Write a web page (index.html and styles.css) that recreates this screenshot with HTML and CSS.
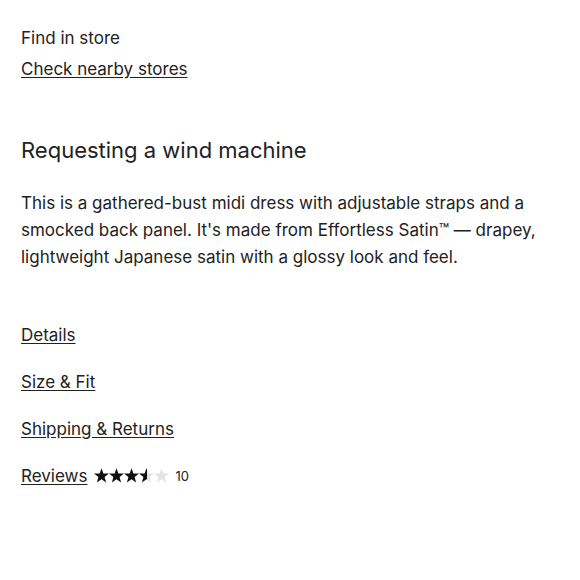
FILE: index.html
```html
<!DOCTYPE html>
<html lang="en">
<head>
  <meta charset="UTF-8" />
  <title>Requesting a wind machine</title>
  <link rel="stylesheet" href="styles.css">
</head>
<body>
  <div class="product-info">
    <div class="store">
      <p class="store-label">Find in store</p>
      <a class="store-link" href="#">Check nearby stores</a>
    </div>

    <h2 class="title">Requesting a wind machine</h2>
    <p class="description">This is a gathered-bust midi dress with adjustable straps and a smocked back panel. It's made from Effortless Satin™ — drapey, lightweight Japanese satin with a glossy look and feel.</p>

    <ul class="sections">
      <li><a href="#">Details</a></li>
      <li><a href="#">Size &amp; Fit</a></li>
      <li><a href="#">Shipping &amp; Returns</a></li>
      <li class="reviews">
        <a href="#">Reviews</a>
        <svg class="stars" width="76" height="16" viewBox="0 0 76 16">
          <defs>
            <path id="star" d="M7.5 0.2 9.4 5.4 15 5.6 10.6 9 12.1 14.5 7.5 11.3 2.9 14.5 4.4 9 0 5.6 5.6 5.4Z" />
            <linearGradient id="half">
              <stop offset="50%" stop-color="#111" />
              <stop offset="50%" stop-color="#e3e3e3" />
            </linearGradient>
          </defs>
          <use href="#star" x="0" fill="#111" />
          <use href="#star" x="15" fill="#111" />
          <use href="#star" x="30" fill="#111" />
          <use href="#star" x="45" fill="url(#half)" />
          <use href="#star" x="60" fill="#e3e3e3" />
        </svg>
        <span class="count">10</span>
      </li>
    </ul>
  </div>
</body>
</html>
```
FILE: styles.css
```css
body {
  margin: 0;
  background: #fff;
  color: #222;
  font-family: "Inter", sans-serif;
}
a {
  color: #222;
  text-underline-offset: 2px;
}
.product-info {
  padding: 26px 21px;
}
.store-label {
  margin: 0;
  font-size: 17px;
  line-height: 24px;
}
.store-link {
  display: inline-block;
  margin-top: 7px;
  font-size: 17px;
  line-height: 24px;
}
.title {
  margin: 54px 0 0;
  font-size: 22px;
  font-weight: normal;
  line-height: 30px;
}
.description {
  margin: 25px 0 0;
  font-size: 17px;
  line-height: 27px;
  padding-right: 18px;
}
.sections {
  list-style: none;
  margin: 52px 0 0;
  padding: 0;
  display: flex;
  flex-direction: column;
  gap: 23px;
}
.sections li {
  font-size: 17px;
  line-height: 24px;
}
.reviews {
  display: flex;
  align-items: center;
}
.stars {
  margin-left: 7px;
}
.count {
  font-size: 13px;
  margin-left: 5px;
}
```
